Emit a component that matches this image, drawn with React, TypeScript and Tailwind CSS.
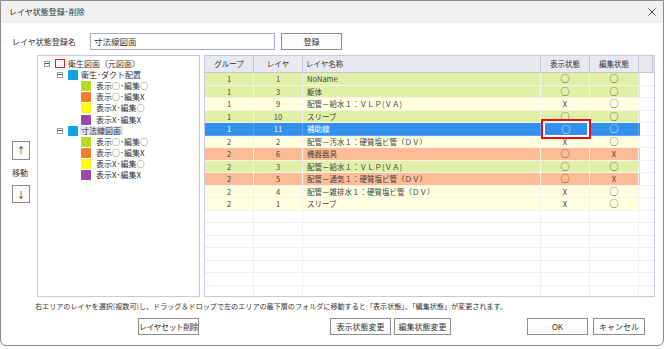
import React from "react";

type Row = { g: string; l: string; name: string; v: string; e: string; c: string; sel?: boolean };

const GREEN = "bg-[#e0f0a6]";
const YELLOW = "bg-[#ffffe0]";
const SALMON = "bg-[#fdbb96]";

const rows: Row[] = [
  { g: "1", l: "1", name: "NoName", v: "○", e: "○", c: GREEN },
  { g: "1", l: "3", name: "躯体", v: "○", e: "○", c: GREEN },
  { g: "1", l: "9", name: "配管－給水１：ＶＬＰ(ＶＡ)", v: "X", e: "○", c: YELLOW },
  { g: "1", l: "10", name: "スリーブ", v: "○", e: "○", c: GREEN },
  { g: "1", l: "11", name: "補助線", v: "○", e: "○", c: "bg-[#3391ee]", sel: true },
  { g: "2", l: "2", name: "配管－汚水１：硬質塩ビ管（ＤＶ）", v: "X", e: "○", c: YELLOW },
  { g: "2", l: "6", name: "機器器具", v: "○", e: "X", c: SALMON },
  { g: "2", l: "3", name: "配管－給水１：ＶＬＰ(ＶＡ)", v: "○", e: "○", c: GREEN },
  { g: "2", l: "5", name: "配管－通気１：硬質塩ビ管（ＤＶ）", v: "○", e: "X", c: SALMON },
  { g: "2", l: "4", name: "配管－雑排水１：硬質塩ビ管（ＤＶ）", v: "X", e: "○", c: YELLOW },
  { g: "2", l: "1", name: "スリーブ", v: "X", e: "○", c: YELLOW },
];

function Mark({ v }: { v: string }) {
  return v === "○" ? <span className="text-[9px] leading-none">○</span> : <span>{v}</span>;
}

function Expander() {
  return (
    <span className="w-[6px] h-[6px] border border-[#9a9a9a] flex items-center justify-center bg-white">
      <span className="w-[4px] h-px bg-[#555]" />
    </span>
  );
}

function Leaf({ color, text }: { color: string; text: string }) {
  return (
    <div className="h-[11.2px] flex items-center pl-[43px]">
      <span className={`w-[10px] h-[10px] rounded-[1px] ${color}`} />
      <span className="ml-[5px] text-[8px] leading-none text-[#333]">{text}</span>
    </div>
  );
}

function Btn({ className, children }: { className: string; children: React.ReactNode }) {
  return (
    <div
      className={`h-[17px] border border-[#8e8e8e] bg-[#fdfdfd] flex items-center justify-center text-[8px] leading-none text-[#333] whitespace-nowrap ${className}`}
    >
      {children}
    </div>
  );
}

export default function App() {
  return (
    <div className="w-[667px] h-[349px] bg-white overflow-hidden font-['Noto_Sans_CJK_JP',sans-serif] text-[#222]">
      <div className="w-[664px] h-[346px] border border-[#8c8c8c] rounded-b-[6px] flex flex-col bg-white overflow-hidden">
        {/* title bar */}
        <div className="h-[22px] bg-[#f0f0f0] flex items-center justify-between pl-[8px] pr-[6px] shrink-0">
          <span className="text-[8px] leading-none text-[#333]">レイヤ状態登録･削除</span>
          <svg width="8" height="8" viewBox="0 0 8 8" className="mr-[1px]">
            <path d="M0.5 0.5 L7.5 7.5 M7.5 0.5 L0.5 7.5" stroke="#333" strokeWidth="0.9" />
          </svg>
        </div>

        {/* name row */}
        <div className="mt-[10px] h-[17px] flex items-center pl-[11px] shrink-0">
          <span className="w-[78px] text-[8px] leading-none text-[#333]">レイヤ状態登録名</span>
          <div className="w-[185px] h-[17px] border border-[#a9a9c6] flex items-center pl-[3px] text-[8.5px] leading-none text-[#333]">
            寸法線図面
          </div>
          <Btn className="ml-[6px] w-[61px]">登録</Btn>
        </div>

        {/* main area */}
        <div className="mt-[5px] h-[242px] flex shrink-0">
          <div className="w-[36px] flex flex-col pl-[11px]">
            <Btn className="mt-[86px] w-[18px] h-[19px] text-[9px]">↑</Btn>
            <span className="mt-[9px] text-[8px] leading-none text-[#333]">移動</span>
            <Btn className="mt-[8px] w-[18px] h-[18px] text-[9px]">↓</Btn>
          </div>

          {/* tree */}
          <div className="w-[163px] h-[242px] border border-[#c9c8de] pt-[2px]">
            <div className="h-[11.2px] flex items-center pl-[6px]">
              <Expander />
              <span className="ml-[5px] w-[10px] h-[9px] border border-[#e0242a] bg-white" />
              <span className="ml-[3px] text-[8px] leading-none text-[#333]">衛生図面（元図面）</span>
            </div>
            <div className="h-[11.2px] flex items-center pl-[19px]">
              <Expander />
              <span className="ml-[5px] w-[10px] h-[10px] rounded-[1px] bg-[#0ea2e6]" />
              <span className="ml-[3px] text-[8px] leading-none text-[#333]">衛生･ダクト配置</span>
            </div>
            <Leaf color="bg-[#b4dc20]" text="表示○･編集○" />
            <Leaf color="bg-[#f77b2c]" text="表示○･編集X" />
            <Leaf color="bg-[#ffff00]" text="表示X･編集○" />
            <Leaf color="bg-[#9d46a8]" text="表示X･編集X" />
            <div className="h-[11.2px] flex items-center pl-[19px]">
              <Expander />
              <span className="ml-[5px] w-[10px] h-[10px] rounded-[1px] bg-[#0ea2e6]" />
              <span className="ml-[2px] px-[1px] h-[9px] flex items-center bg-[#e4e4ee] text-[8px] leading-none text-[#333] pr-[2px]">
                寸法線図面
              </span>
            </div>
            <Leaf color="bg-[#b4dc20]" text="表示○･編集○" />
            <Leaf color="bg-[#f77b2c]" text="表示○･編集X" />
            <Leaf color="bg-[#ffff00]" text="表示X･編集○" />
            <Leaf color="bg-[#9d46a8]" text="表示X･編集X" />
          </div>

          {/* grid */}
          <div className="ml-[4px] w-[451px] h-[242px] border border-[#c9c8de] overflow-hidden">
            <div className="h-[17px] flex bg-[#e8e8ef] border-b border-[#c6c6d2] text-[7.5px] leading-none text-[#333]">
              <div className="w-[49px] border-r border-[#c6c6d2] flex items-center justify-center">グループ</div>
              <div className="w-[49px] border-r border-[#c6c6d2] flex items-center justify-center">レイヤ</div>
              <div className="w-[238px] border-r border-[#c6c6d2] flex items-center pl-[3px]">レイヤ名称</div>
              <div className="w-[49px] border-r border-[#c6c6d2] flex items-center justify-center">表示状態</div>
              <div className="w-[49px] border-r border-[#c6c6d2] flex items-center justify-center">編集状態</div>
              <div className="w-[14px] border-r border-[#c6c6d2]" />
            </div>
            {rows.map((r, i) => {
              const txt = r.sel ? "text-white" : "text-[#444]";
              const line = r.sel ? "border-[#5aa6f2]" : "border-[#f4f4ec]";
              return (
                <div key={i} className="h-[12.5px] flex text-[7.5px] leading-none">
                  <div className={`w-[435px] flex ${r.c} ${txt} border-b ${line}`}>
                    <div className={`w-[49px] border-r ${line} flex items-center justify-center`}>{r.g}</div>
                    <div className={`w-[49px] border-r ${line} flex items-center justify-center`}>{r.l}</div>
                    <div className={`w-[238px] border-r ${line} flex items-center pl-[4px]`}>{r.name}</div>
                    <div className={`w-[49px] border-r ${line} flex items-center justify-center relative`}>
                      {r.sel ? (
                        <div className="absolute left-0 w-[50px] top-[-4px] h-[20px] border-2 border-[#e3101b] bg-white px-[2px] py-[2px] z-10">
                          <div className="w-full h-full bg-[#3391ee] flex items-center justify-center text-white">
                            <Mark v="○" />
                          </div>
                        </div>
                      ) : (
                        <Mark v={r.v} />
                      )}
                    </div>
                    <div className={`w-[49px] border-r ${line} flex items-center justify-center`}>
                      <Mark v={r.e} />
                    </div>
                  </div>
                  <div className="w-[14px] border-b border-[#f0f0f0]" />
                </div>
              );
            })}
            {Array.from({ length: 7 }).map((_, i) => (
              <div key={"e" + i} className="h-[12.5px] flex border-b border-[#efefef]">
                <div className="w-[49px] border-r border-[#efefef]" />
                <div className="w-[49px] border-r border-[#efefef]" />
                <div className="w-[238px] border-r border-[#efefef]" />
                <div className="w-[49px] border-r border-[#efefef]" />
                <div className="w-[49px] border-r border-[#efefef]" />
                <div className="w-[14px]" />
              </div>
            ))}
          </div>
        </div>

        {/* help text */}
        <div className="mt-[5px] pl-[34px] h-[10px] flex items-center text-[7.1px] leading-none text-[#333] whitespace-nowrap">
          右エリアのレイヤを選択(複数可)し、ドラッグ＆ドロップで左のエリアの最下層のフォルダに移動すると「表示状態」、「編集状態」が変更されます。
        </div>

        {/* buttons */}
        <div className="mt-[6px] flex">
          <Btn className="ml-[137px] w-[61px] text-[7px] tracking-[-0.6px]">レイヤセット削除</Btn>
          <Btn className="ml-[131px] w-[61px]">表示状態変更</Btn>
          <Btn className="ml-[3px] w-[57px]">編集状態変更</Btn>
          <Btn className="ml-[76px] w-[61px]">OK</Btn>
          <Btn className="ml-[5px] w-[52px]">キャンセル</Btn>
        </div>
      </div>
    </div>
  );
}
